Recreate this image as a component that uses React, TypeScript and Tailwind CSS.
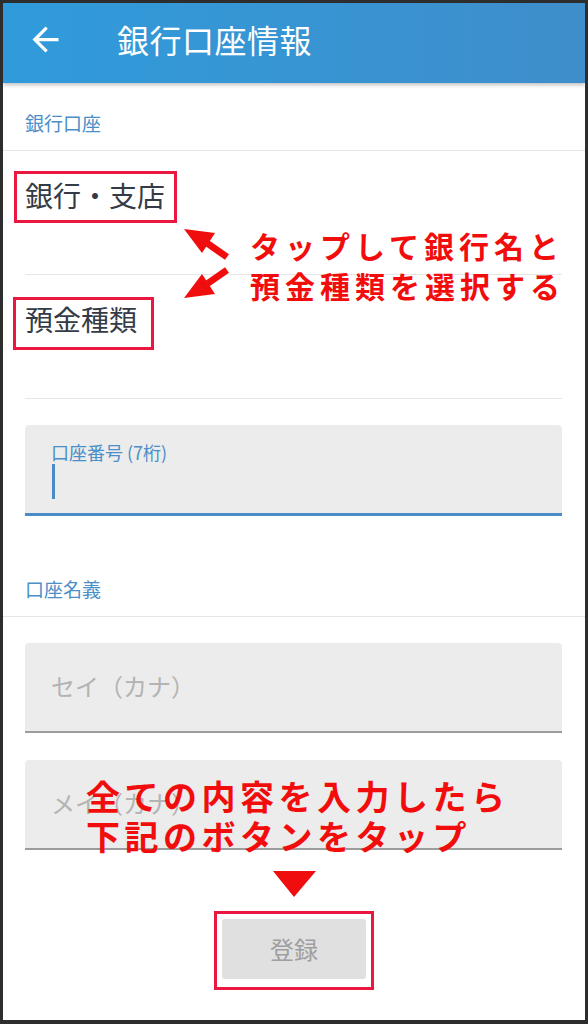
import React from 'react';

const SectionLabel: React.FC<{ label: string; className?: string }> = ({ label, className }) => (
    <div className={`pl-[22px] pb-[15px] border-b border-[#e6e6e6] text-[19px] leading-[24px] text-[#4b8ec8] ${className ?? ''}`}>
        {label}
    </div>
);

const SelectRow: React.FC<{ label: string }> = ({ label }) => (
    <div className="h-[124px] pt-[26px] border-b border-[#e6e6e6] text-[28px] leading-[36px] text-[#343b46]">
        {label}
    </div>
);

const PlaceholderField: React.FC<{ placeholder: string; className?: string }> = ({ placeholder, className }) => (
    <div className={`h-[90px] flex items-center pb-[2px] pl-[26px] bg-[#ececec] rounded-t-[4px] border-b-2 border-[#9c9c9c] text-[24px] text-[#b3b3b3] ${className ?? ''}`}>
        {placeholder}
    </div>
);

const BackArrow = () => (
    <svg width="39" height="39" viewBox="0 0 24 24" fill="white">
        <path d="M20 11H7.83l5.59-5.59L12 4l-8 8 8 8 1.41-1.41L7.83 13H20v-2z" />
    </svg>
);

const Pointer: React.FC<{ className?: string }> = ({ className }) => (
    <svg width="46" height="32" viewBox="0 0 46 32" className={className}>
        <polygon points="0,0 31,4 18,24" fill="#f00d0d" />
        <line x1="20" y1="12" x2="43" y2="28" stroke="#f00d0d" strokeWidth="7" />
    </svg>
);

export default function App() {
    return (
        <div className="relative w-[588px] h-[1024px] overflow-hidden bg-white border-[#2d2d2d] border-l-[3px] border-t-[3px] border-r-[3px] border-b-[4px] font-['Noto_Sans_CJK_JP','Noto_Sans',sans-serif]">
            {/* app bar */}
            <div className="relative z-10 h-[80px] flex items-center pb-[8px] pl-[23px] bg-gradient-to-r from-[#2f9bdb] to-[#3e8ecb] shadow-[0_2px_4px_rgba(0,0,0,0.25)]">
                <BackArrow />
                <span className="ml-[52px] text-[32px] leading-[40px] tracking-[0.5px] text-white">銀行口座情報</span>
            </div>

            <SectionLabel label="銀行口座" className="pt-[28px]" />

            <div className="ml-[22px] mr-[23px]">
                <SelectRow label="銀行・支店" />
                <SelectRow label="預金種類" />

                <div className="mt-[26px] h-[91px] pt-[15px] pl-[26px] bg-[#ececec] rounded-t-[4px] border-b-[3px] border-[#4a8cc8]">
                    <div className="text-[18px] leading-[24px] text-[#4b8ec8]">口座番号 (7桁)</div>
                    <div className="ml-[1px] w-[3px] h-[35px] bg-[#4a8cc8]" />
                </div>
            </div>

            <SectionLabel label="口座名義" className="pt-[61px]" />

            <div className="ml-[22px] mr-[23px]">
                <PlaceholderField placeholder="セイ（カナ）" className="mt-[26px]" />
                <PlaceholderField placeholder="メイ（カナ）" className="mt-[27px]" />
            </div>

            <div className="mt-[69px] mx-auto w-[144px] h-[60px] flex items-center justify-center rounded-[3px] bg-[#e0e0e0] text-[24px] text-[#9e9e9e]">
                登録
            </div>

            {/* annotations */}
            <div className="absolute left-[11px] top-[168px] w-[163px] h-[52px] border-[3px] border-[#ea1840]" />
            <div className="absolute left-[10px] top-[294px] w-[141px] h-[53px] border-[3px] border-[#ea1840]" />
            <Pointer className="absolute left-[181px] top-[226px]" />
            <Pointer className="absolute left-[181px] top-[263px] -scale-y-100" />
            <div className="absolute left-[247px] top-[222px] text-[30px] leading-[40px] font-bold tracking-[5px] text-[#f20d0d]">
                <div>タップして銀行名と</div>
                <div>預金種類を選択する</div>
            </div>
            <div className="absolute left-[83px] top-[773px] text-[34px] leading-[40px] font-bold tracking-[4.5px] text-[#f20d0d]">
                <div>全ての内容を入力したら</div>
                <div>下記のボタンをタップ</div>
            </div>
            <div className="absolute left-[270px] top-[868px] w-0 h-0 border-l-[21px] border-r-[22px] border-t-[26px] border-l-transparent border-r-transparent border-t-[#f00d0d]" />
            <div className="absolute left-[211px] top-[908px] w-[160px] h-[79px] border-[3px] border-[#ea1840]" />
        </div>
    );
}
